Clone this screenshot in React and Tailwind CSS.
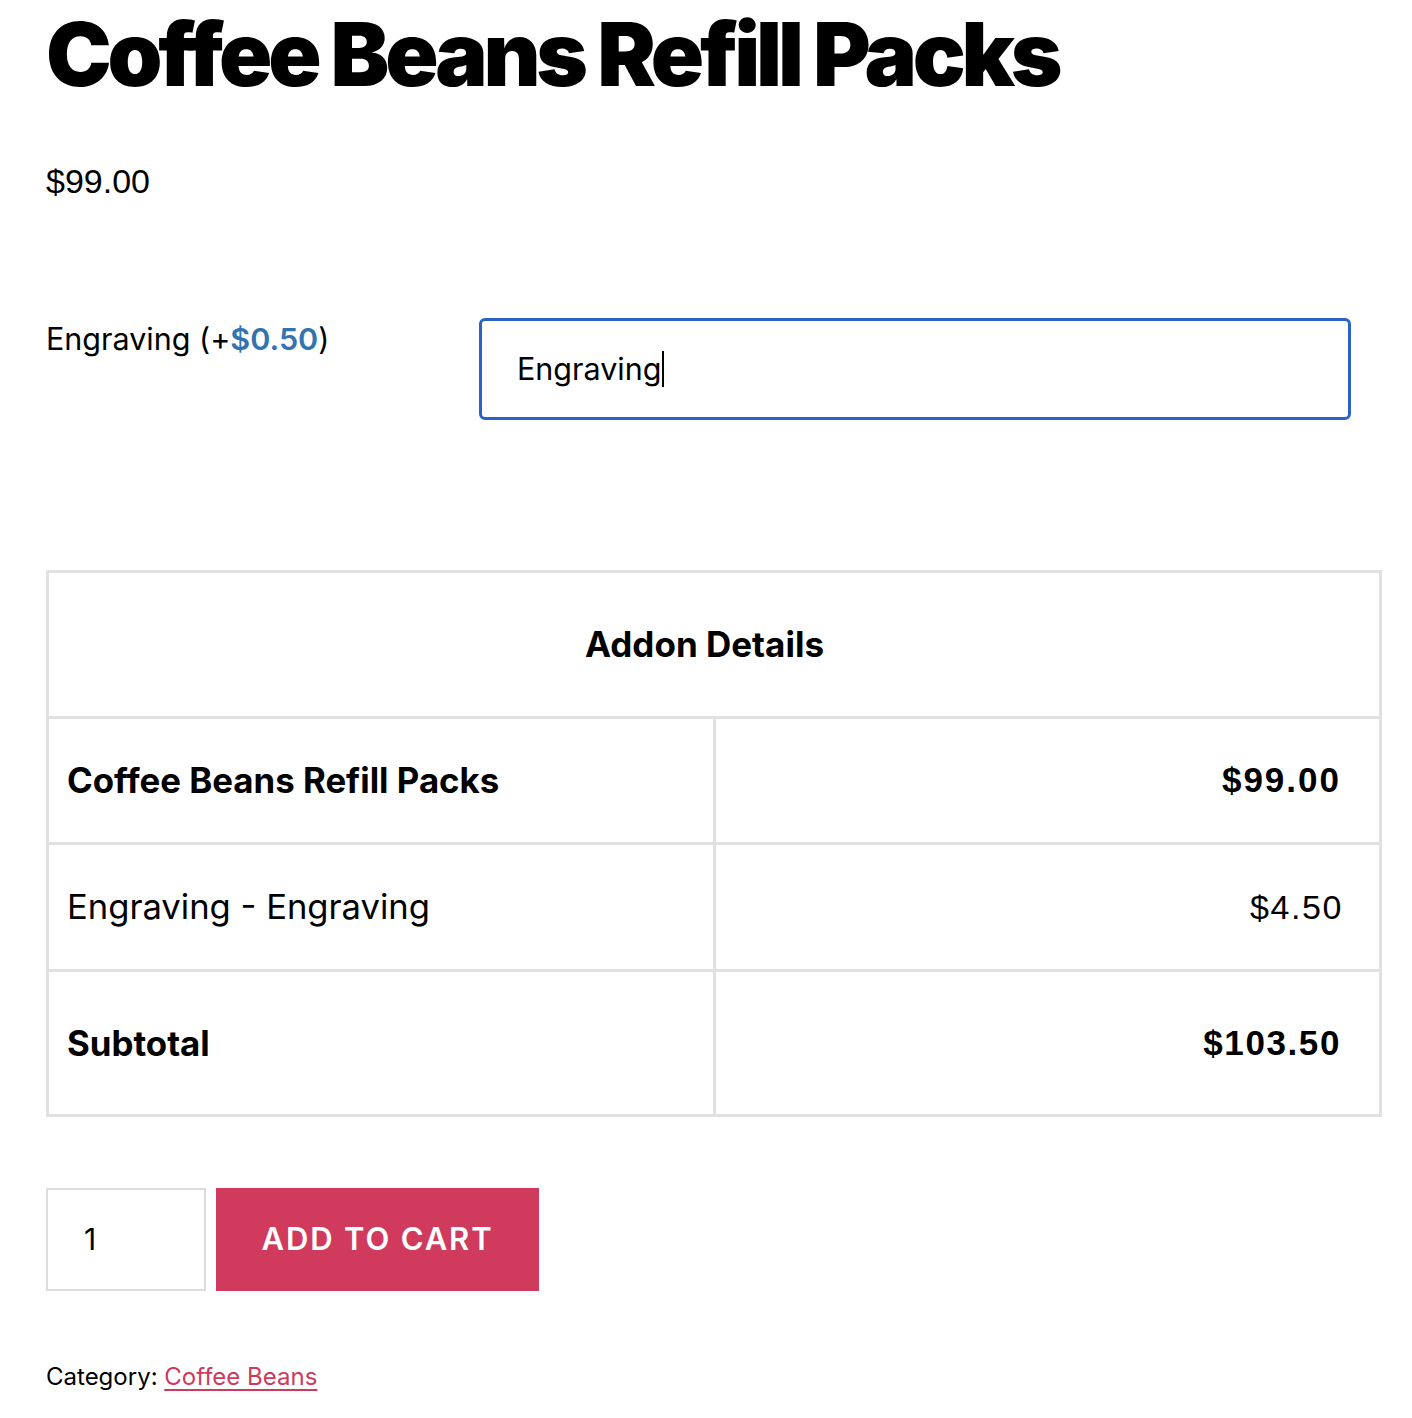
import React from 'react';

export default function App() {
  return (
    <div className="min-h-screen bg-white text-black font-['Inter',sans-serif]">
      <div className="pl-[46px] pr-[30px]">
        <h1 className="pt-[10px] text-[88px] leading-[1] font-black tracking-[-0.048em]">
          Coffee Beans Refill Packs
        </h1>

        <p className="mt-[66px] text-[34px] leading-[1] font-['Liberation_Sans',sans-serif]">$99.00</p>

        <div className="mt-[120px] flex items-start">
          <label className="w-[433px] pt-[3px] text-[30.5px] leading-[1.2]">
            Engraving (+<span className="font-semibold text-[#3274ae]">$0.50</span>)
          </label>
          <div className="flex h-[102px] w-[872px] items-center rounded-[6px] border-[3px] border-[#2b62c8] px-[35px]">
            <span className="text-[30.5px] leading-[1]">Engraving</span>
            <span className="ml-[1px] h-[36px] w-[2px] bg-black"></span>
          </div>
        </div>

        <table className="mt-[150px] w-[1336px] border-collapse border-[3px] border-[#e1e1e1]">
          <tbody>
            <tr className="h-[146px]">
              <th colSpan={2} className="border-[3px] border-[#e1e1e1] pr-[19px] text-center text-[35px] font-bold">
                Addon Details
              </th>
            </tr>
            <tr className="h-[126px]">
              <td className="w-[667px] border-[3px] border-[#e1e1e1] pl-[18px] text-[34.8px] font-bold">
                Coffee Beans Refill Packs
              </td>
              <td className="border-[3px] border-[#e1e1e1] pr-[38px] text-right text-[35px] font-bold tracking-[2px] font-['Liberation_Sans',sans-serif]">
                $99.00
              </td>
            </tr>
            <tr className="h-[127px]">
              <td className="border-[3px] border-[#e1e1e1] pl-[18px] text-[34.6px]">Engraving - Engraving</td>
              <td className="border-[3px] border-[#e1e1e1] pr-[36px] text-right text-[34px] tracking-[1.6px] font-['Liberation_Sans',sans-serif]">
                $4.50
              </td>
            </tr>
            <tr className="h-[145px]">
              <td className="border-[3px] border-[#e1e1e1] pl-[18px] text-[34.8px] font-bold">Subtotal</td>
              <td className="border-[3px] border-[#e1e1e1] pr-[38px] text-right text-[35px] font-bold tracking-[1.6px] font-['Liberation_Sans',sans-serif]">
                $103.50
              </td>
            </tr>
          </tbody>
        </table>

        <div className="mt-[71px] flex gap-[10px]">
          <div className="flex h-[103px] w-[160px] items-center border-[2px] border-[#dcdcdc] pl-[36px] text-[30px]">1</div>
          <button className="h-[103px] w-[323px] bg-[#d03a5c] text-[31px] font-semibold uppercase tracking-[0.06em] text-white">
            Add to cart
          </button>
        </div>

        <p className="mt-[74px] text-[24px] leading-[1]">
          Category: <a className="text-[#cd3a5c] underline underline-offset-[4px]" href="#">Coffee Beans</a>
        </p>
      </div>
    </div>
  );
}
